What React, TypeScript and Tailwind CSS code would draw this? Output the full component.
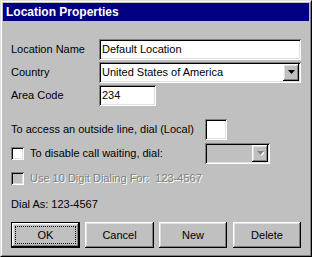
import React from 'react';

const sunken =
  'shadow-[inset_1px_1px_0_#808080,inset_-1px_-1px_0_#ffffff,inset_2px_2px_0_#000000,inset_-2px_-2px_0_#dfdfdf]';
const raised =
  'shadow-[inset_-1px_-1px_0_#000000,inset_1px_1px_0_#ffffff,inset_-2px_-2px_0_#808080,inset_2px_2px_0_#dfdfdf]';

function Arrow({ disabled = false }: { disabled?: boolean }) {
  return (
    <div className={`flex h-[17px] w-[16px] items-center justify-center bg-[#c0c0c0] ${raised}`}>
      <svg width="7" height="5" viewBox="0 0 7 5">
        {disabled && <path d="M1 1h7L4.5 5z" fill="#ffffff" />}
        <path d="M0 0h7L3.5 4z" fill={disabled ? '#808080' : '#000000'} />
      </svg>
    </div>
  );
}

function Field({ value, width }: { value: string; width: string }) {
  return (
    <div className={`flex h-[21px] items-center bg-white pl-[3px] ${sunken} ${width}`}>{value}</div>
  );
}

function Checkbox({ disabled = false }: { disabled?: boolean }) {
  return (
    <div className={`h-[13px] w-[13px] shrink-0 ${disabled ? 'bg-[#c0c0c0]' : 'bg-white'} ${sunken}`} />
  );
}

function Button({ label, width, isDefault = false }: { label: string; width: string; isDefault?: boolean }) {
  if (isDefault) {
    return (
      <div className={`h-[26px] border border-black ${width}`}>
        <div className={`flex h-full w-full items-center justify-center bg-[#c0c0c0] ${raised}`}>
          <div className="flex h-[18px] w-[61px] items-center justify-center border border-dotted border-black">
            {label}
          </div>
        </div>
      </div>
    );
  }
  return (
    <div className={`flex h-[26px] items-center justify-center bg-[#c0c0c0] ${raised} ${width}`}>
      {label}
    </div>
  );
}

export default function App() {
  return (
    <div
      className="h-[257px] w-[312px] border border-t-[#dfdfdf] border-l-[#dfdfdf] border-r-black border-b-black bg-[#c0c0c0] text-[11px] text-black"
      style={{ fontFamily: '"Liberation Sans", Arial, sans-serif' }}
    >
      <div className="flex h-full w-full flex-col border border-t-white border-l-white border-r-[#808080] border-b-[#808080] p-px">
        <div className="flex h-[18px] items-center bg-[#000080] pl-[3px] text-[12px] font-bold text-white">
          Location Properties
        </div>

        <div className="flex flex-col pl-[8px] pt-[18px]">
          <div className="grid grid-cols-[88px_1fr] gap-y-[2px] pr-[7px]">
            <div className="flex h-[21px] items-center">Location Name</div>
            <Field value="Default Location" width="w-[202px]" />
            <div className="flex h-[21px] items-center">Country</div>
            <div className={`flex h-[21px] w-[202px] items-center justify-between bg-white pl-[3px] pr-[2px] ${sunken}`}>
              <span>United States of America</span>
              <Arrow />
            </div>
            <div className="flex h-[21px] items-center">Area Code</div>
            <Field value="234" width="w-[57px]" />
          </div>

          <div className="mt-[13px] flex h-[21px] items-center">
            <span className="w-[194px]">To access an outside line, dial (Local)</span>
            <div className={`h-[21px] w-[22px] bg-white ${sunken}`} />
          </div>

          <div className="mt-[3px] flex h-[21px] items-center">
            <div className="flex w-[194px] items-center gap-[6px]">
              <Checkbox />
              <span>To disable call waiting, dial:</span>
            </div>
            <div className={`flex h-[21px] w-[65px] items-center justify-end pr-[2px] bg-[#c0c0c0] ${sunken}`}>
              <Arrow disabled />
            </div>
          </div>

          <div className="mt-[4px] flex h-[20px] items-center gap-[6px] text-[#808080] [text-shadow:1px_1px_0_#ffffff]">
            <Checkbox disabled />
            <span>Use 10 Digit Dialing For:&nbsp; 123-4567</span>
          </div>

          <div className="mt-[6px] flex h-[20px] items-center">Dial As: 123-4567</div>

          <div className="mt-[8px] flex">
            <Button label="OK" width="w-[69px]" isDefault />
            <div className="ml-[5px]">
              <Button label="Cancel" width="w-[69px]" />
            </div>
            <div className="ml-[5px]">
              <Button label="New" width="w-[68px]" />
            </div>
            <div className="ml-[6px]">
              <Button label="Delete" width="w-[68px]" />
            </div>
          </div>
        </div>
      </div>
    </div>
  );
}
